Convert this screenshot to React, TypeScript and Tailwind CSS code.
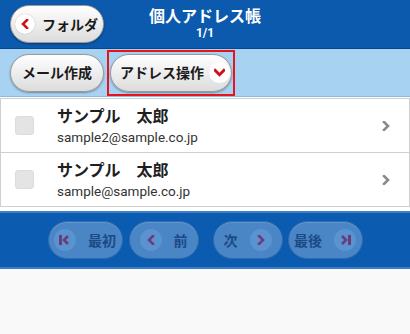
import React from 'react';

const jp = { fontFamily: '"Noto Sans CJK JP", "Noto Sans", sans-serif' };
const latin = { fontFamily: 'Roboto, "Noto Sans CJK JP", sans-serif' };

const Chevron = ({ dir, color, size = 10 }: { dir: 'left' | 'right' | 'down'; color: string; size?: number }) => {
  const d =
    dir === 'left' ? 'M7 1 L3 5 L7 9' : dir === 'right' ? 'M3 1 L7 5 L3 9' : 'M1 3 L5 7 L9 3';
  return (
    <svg width={size} height={size} viewBox="0 0 10 10">
      <path d={d} fill="none" stroke={color} strokeWidth="2.6" strokeLinecap="square" />
    </svg>
  );
};

const pill =
  'h-[38px] rounded-full border border-[#9a9a9a] bg-gradient-to-b from-white to-[#dcdcdc] shadow-[0_1px_2px_rgba(0,0,0,0.35)] flex items-center text-[#1a1a1a] font-bold text-[14px] whitespace-nowrap';

const NavButton = ({ label, icon, iconRight, w }: { label: string; icon: React.ReactNode; iconRight?: boolean; w: string }) => (
  <button
    className={`${w} h-[38px] rounded-full bg-[#4a86c6] border border-[#2f6bb0] shadow-[inset_0_1px_0_rgba(255,255,255,0.15)] flex items-center justify-center gap-[12px] text-[#1c4a86] font-bold text-[14px] whitespace-nowrap`}
    style={jp}
  >
    {!iconRight && <span className="w-[22px] h-[22px] rounded-full bg-[#5a93cf] flex items-center justify-center">{icon}</span>}
    <span>{label}</span>
    {iconRight && <span className="w-[22px] h-[22px] rounded-full bg-[#5a93cf] flex items-center justify-center">{icon}</span>}
  </button>
);

const Row = ({ email }: { email: string }) => (
  <div className="h-[54px] flex items-center border-x border-b border-[#cfcfcf] bg-white">
    <div className="w-[19px] h-[19px] ml-[14px] rounded-[3px] bg-[#e4e4e4] border border-[#dcdcdc]" />
    <div className="ml-[23px] flex-1 flex flex-col">
      <span className="text-[16px] font-bold text-[#1e1e1e] leading-[22px]" style={jp}>サンプル　太郎</span>
      <span className="text-[13.5px] text-[#333] leading-[22px]" style={latin}>{email}</span>
    </div>
    <div className="mr-[18px]">
      <Chevron dir="right" color="#8a8a8a" size={10} />
    </div>
  </div>
);

export default function App() {
  return (
    <div className="w-[410px] h-[334px] bg-[#f9f9f9] overflow-hidden" style={jp}>
      {/* header */}
      <div className="h-[49px] bg-[#0b5aad] flex items-center px-[10px] relative border-b border-[#08478a]">
        <button className={`${pill} w-[94px] pl-[4px] gap-[7px]`} style={jp}>
          <span className="w-[20px] h-[20px] rounded-full bg-white flex items-center justify-center shadow-[0_0_1px_rgba(0,0,0,0.3)]">
            <Chevron dir="left" color="#d0101c" size={10} />
          </span>
          フォルダ
        </button>
        <div className="absolute left-0 right-0 top-[5px] flex flex-col items-center text-white pointer-events-none">
          <span className="text-[16px] font-bold leading-[20px]">個人アドレス帳</span>
          <span className="text-[12px] font-bold leading-[16px]" style={latin}>1/1</span>
        </div>
      </div>
      {/* toolbar */}
      <div className="h-[48px] bg-[#a8d2f2] flex items-center pl-[10px] gap-[3px] border-b border-[#8fb9dc]">
        <button className={`${pill} w-[94px] justify-center`} style={jp}>メール作成</button>
        <div className="border-2 border-[#e8141c] p-[1px] h-[46px] flex items-center">
          <button className={`${pill} w-[122px] pl-[9px] gap-[5px]`} style={jp}>
            アドレス操作
            <span className="w-[21px] h-[21px] rounded-full bg-white flex items-center justify-center">
              <Chevron dir="down" color="#d0101c" size={11} />
            </span>
          </button>
        </div>
      </div>
      {/* list */}
      <div className="pt-[1px] bg-white">
        <div className="border-t border-[#cfcfcf]">
          <Row email="sample2@sample.co.jp" />
          <Row email="sample@sample.co.jp" />
        </div>
      </div>
      <div className="h-[4px] bg-white" />
      {/* footer */}
      <div className="h-[58px] bg-[#0b5cb0] border-t-2 border-b-2 border-t-[#3f7fc8] border-b-[#3a7cc6] flex items-center justify-center">
        <div className="flex gap-[6px]">
          <NavButton w="w-[75px]" label="最初" icon={<svg width="12" height="10" viewBox="0 0 12 10"><path d="M1.5 0 V10" stroke="#6b3d78" strokeWidth="3" /><path d="M9 1 L5 5 L9 9" fill="none" stroke="#6b3d78" strokeWidth="2.6" /></svg>} />
          <NavButton w="w-[70px]" label="前" icon={<Chevron dir="left" color="#6b3d78" />} />
        </div>
        <div className="w-[14px]" />
        <div className="flex gap-[5px]">
          <NavButton w="w-[70px]" label="次" iconRight icon={<Chevron dir="right" color="#6b3d78" />} />
          <NavButton w="w-[75px]" label="最後" iconRight icon={<svg width="12" height="10" viewBox="0 0 12 10"><path d="M3 1 L7 5 L3 9" fill="none" stroke="#6b3d78" strokeWidth="2.6" /><path d="M10.5 0 V10" stroke="#6b3d78" strokeWidth="3" /></svg>} />
        </div>
      </div>
    </div>
  );
}
